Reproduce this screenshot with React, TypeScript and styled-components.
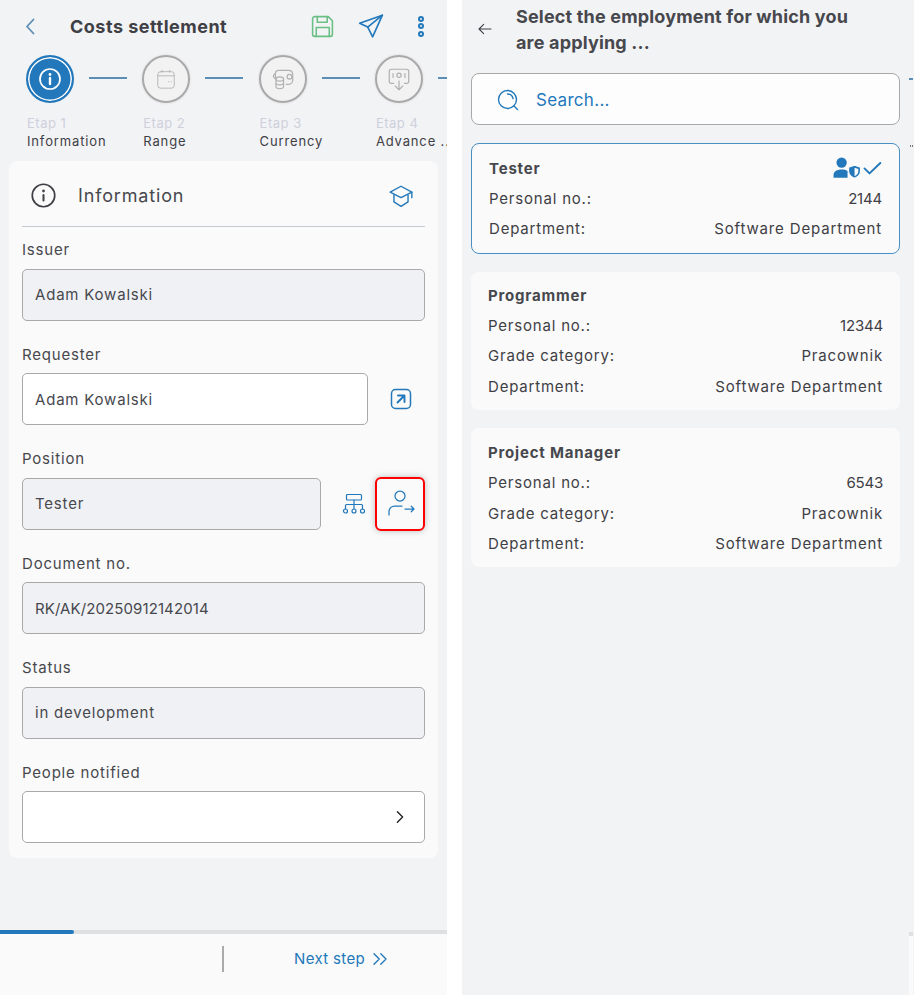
import React from 'react';
import styled, { createGlobalStyle } from 'styled-components';

const BLUE = '#2278ba';
const STEPS = [
  { etap: 'Etap 1', name: 'Information', active: true },
  { etap: 'Etap 2', name: 'Range' },
  { etap: 'Etap 3', name: 'Currency' },
  { etap: 'Etap 4', name: 'Advance ...' },
];

const JOBS = [
  {
    title: 'Tester',
    selected: true,
    top: 12,
    rows: [['Personal no.:', '2144'], ['Department:', 'Software Department']],
  },
  {
    title: 'Programmer',
    top: 10,
    rows: [['Personal no.:', '12344'], ['Grade category:', 'Pracownik'], ['Department:', 'Software Department']],
  },
  {
    title: 'Project Manager',
    top: 12,
    rows: [['Personal no.:', '6543'], ['Grade category:', 'Pracownik'], ['Department:', 'Software Department']],
  },
];

function Icon({ size, color, width = 1.5, box = 24, children }: any) {
  return (
    <svg width={size} height={size} viewBox={`0 0 ${box} ${box}`} fill="none" stroke={color} strokeWidth={width} strokeLinecap="round" strokeLinejoin="round">
      {children}
    </svg>
  );
}

function StepIcon({ index }: { index: number }) {
  if (index === 0) {
    return (
      <Icon size={24} color="#fff" width={1.7}>
        <circle cx="12" cy="12" r="10" />
        <path d="M12 11v6" strokeWidth={2.4} />
        <circle cx="12" cy="7.5" r="0.6" fill="#fff" />
      </Icon>
    );
  }
  if (index === 1) {
    return (
      <Icon size={22} color="#b4b4b4" width={1}>
        <rect x="3" y="4" width="18" height="18" rx="3" />
        <path d="M3 8.500h18M8 2.500v2M16 2.500v2M14.500 15h.5M17.500 15h.5" />
      </Icon>
    );
  }
  if (index === 2) {
    return (
      <Icon size={26} color="#b0b0b0" width={1.1}>
        <path d="M5 12V7a3 3 0 0 1 3-3h9c3 0 4 2 4 4v5a4 4 0 0 1-4 4h-2" />
        <path d="M5 7c-2 1-2.500 3-1 4" />
        <circle cx="18" cy="10" r="2.200" />
        <ellipse cx="9" cy="12" rx="3.500" ry="2" />
        <path d="M5.500 12v7c0 1.200 1.500 2 3.500 2s3.500-.8 3.500-2v-7M5.500 15.500c0 1.200 1.500 2 3.500 2s3.500-.8 3.500-2" />
      </Icon>
    );
  }
  return (
    <Icon size={26} color="#b0b0b0" width={1.1}>
      <path d="M7 16H5a2 2 0 0 1-2-2V5a2 2 0 0 1 2-2h14a2 2 0 0 1 2 2v9a2 2 0 0 1-2 2h-2" />
      <circle cx="12" cy="8.500" r="2" />
      <path d="M6.500 7v3.500M17.500 7v3.500M12 14v8M8.500 18.500 12 22l3.500-3.500" />
    </Icon>
  );
}

function Field({ label, value, readOnly, code, children }: any) {
  return (
    <FieldBlock>
      <FieldLabel>{label}</FieldLabel>
      <FieldRow>
        <InputBox $readOnly={readOnly} $code={code}>{value}</InputBox>
        {children}
      </FieldRow>
    </FieldBlock>
  );
}

export default function App() {
  return (
    <Page>
      <GlobalStyle />
      <LeftPanel>
        <TopBar>
          <BackBtn>
            <Icon size={24} color="#5b8db5" width={1.8}>
              <path d="M14.500 5.500 8 12.500l6.500 7" />
            </Icon>
          </BackBtn>
          <PageTitle>Costs settlement</PageTitle>
          <TopActions>
            <Icon size={25} color="#6abf85" width={1.5}>
              <path d="M4.500 2.500h13l4 4v13a2 2 0 0 1-2 2h-15a2 2 0 0 1-2-2v-15a2 2 0 0 1 2-2Z" />
              <path d="M7 2.500v5.500h9.500V2.500M6 21.500V13h12.500v8.500" />
            </Icon>
            <Icon size={26} color={BLUE} width={1.5}>
              <path d="M22.500 2 1.500 9.500l7.500 3.500 4.500 9z" />
              <path d="M22.500 2 9 13" />
            </Icon>
            <DotsIcon>
              <span />
              <span />
              <span />
            </DotsIcon>
          </TopActions>
        </TopBar>

        <Stepper>
          {STEPS.map((step, i) => (
            <Step key={step.etap}>
              <StepTrack>
                <StepCircle $active={step.active}>
                  <StepIcon index={i} />
                </StepCircle>
                <StepLine />
              </StepTrack>
              <StepEtap>{step.etap}</StepEtap>
              <StepName>{step.name}</StepName>
            </Step>
          ))}
        </Stepper>

        <FormCard>
          <CardHead>
            <Icon size={27} color="#3f4045" width={1.5}>
              <circle cx="12" cy="12" r="10" />
              <path d="M12 11.500v5" strokeWidth={1.8} />
              <circle cx="12" cy="8" r="0.5" fill="#3f4045" />
            </Icon>
            <CardHeadTitle>Information</CardHeadTitle>
            <Icon size={26} color={BLUE} width={1.3}>
              <path d="M12 3 2 8.500 12 13.500l10-5z" />
              <path d="M5.500 11v6.500L12 21.500l6.500-4V11M22 8.500v5" />
            </Icon>
          </CardHead>

          <Field label="Issuer" value="Adam Kowalski" readOnly />
          <Field label="Requester" value="Adam Kowalski">
            <SideBtn $w={57} $pad={12}>
              <Icon size={24} color={BLUE} width={1.5}>
                <rect x="2.500" y="2.500" width="19" height="19" rx="4" />
                <path d="M9 8.500h6.500V15M15.500 8.500 8.500 15.500" strokeWidth={1.9} />
              </Icon>
            </SideBtn>
          </Field>
          <Field label="Position" value="Tester" readOnly>
            <SideBtn $w={50} $pad={5}>
              <Icon size={24} color={BLUE} width={1.2}>
                <rect x="4.500" y="2.500" width="15" height="5.500" rx="1" />
                <path d="M12 8v9M3.500 17v-3.500a1 1 0 0 1 1-1h15a1 1 0 0 1 1 1V17" />
                <circle cx="3.500" cy="19" r="2" />
                <circle cx="12" cy="19" r="2" />
                <circle cx="20.500" cy="19" r="2" />
              </Icon>
            </SideBtn>
            <HighlightBtn>
              <Icon size={30} color={BLUE} width={1}>
                <circle cx="12" cy="5.600" r="4" />
                <path d="M3.200 20.800v-2.700a4.500 4.500 0 0 1 4.500-4.500h5.900M16 16h7.200M21 13.800l2.200 2.200-2.200 2.200" />
              </Icon>
            </HighlightBtn>
          </Field>
          <Field label="Document no." value="RK/AK/20250912142014" readOnly code />
          <Field label="Status" value="in development" readOnly />
          <Field label="People notified" value="">
            <ChevronInInput>
              <Icon size={18} color="#222" width={1.8}>
                <path d="m8.500 5 7 7-7 7" />
              </Icon>
            </ChevronInInput>
          </Field>
        </FormCard>

        <Footer>
          <Progress>
            <ProgressFill style={{ width: `${(1 / 6) * 100}%` }} />
          </Progress>
          <FooterBar>
            <FooterDivider />
            <NextStep>
              Next step
              <Icon size={18} color={BLUE} width={1.8}>
                <path d="m4 5 7 7-7 7M13 5l7 7-7 7" />
              </Icon>
            </NextStep>
          </FooterBar>
        </Footer>
      </LeftPanel>

      <RightPanel>
        <DialogHead>
          <DialogBack>
            <Icon size={16} color="#3f4045" width={1.6}>
              <path d="M21 12H3M10 5l-7 7 7 7" />
            </Icon>
          </DialogBack>
          <DialogTitle>Select the employment for which you are applying ...</DialogTitle>
        </DialogHead>

        <SearchBox>
          <Icon size={24} color={BLUE} width={1.4}>
            <circle cx="11.500" cy="11.500" r="9" />
            <path d="M18 18l3.500 3.500M11.500 6c3 0 5 2 5.500 4.500" />
          </Icon>
          <SearchText>Search...</SearchText>
        </SearchBox>

        {JOBS.map(job => (
          <JobCard key={job.title} $selected={job.selected} $top={job.top}>
            <JobHead>
              <JobTitle>{job.title}</JobTitle>
              {job.selected && (
                <JobMarks>
                  <svg width="28" height="22" viewBox="0 0 26 20" fill={BLUE}>
                    <circle cx="8" cy="5" r="4.800" />
                    <path d="M0.500 19v-2.500c0-3 3-5 7.500-5 2 0 4 .4 5.500 1.200V19z" />
                    <path d="M20 7.500l5.500 1.800v3.700c0 3-2.300 5.200-5.500 6.500-3.200-1.300-5.500-3.500-5.500-6.500V9.300z" stroke="#fafafa" strokeWidth="1" />
                    <path d="M20 9.800l3.500 1.200v2.300c0 2-1.500 3.400-3.500 4.300z" fill="#fafafa" />
                  </svg>
                  <Icon size={20} color={BLUE} width={2.3}>
                    <path d="m3 12.500 6 6L22 6" />
                  </Icon>
                </JobMarks>
              )}
            </JobHead>
            {job.rows.map(([k, v]) => (
              <JobRow key={k}>
                <span>{k}</span>
                <JobValue $num={/^\d+$/.test(v)}>{v}</JobValue>
              </JobRow>
            ))}
          </JobCard>
        ))}

        <EdgeStrip>
          <EdgeTick />
          <EdgeDots />
          <EdgeTrack />
          <EdgeFooter />
        </EdgeStrip>
      </RightPanel>
    </Page>
  );
}

const GlobalStyle = createGlobalStyle`
  html, body { margin: 0; padding: 0; background: #fff; }
  * { box-sizing: border-box; }
  body { font-family: Inter, "Open Sans", "Liberation Sans", sans-serif; color: #3f4045; }
`;

const Page = styled.div`
  display: flex;
  width: 914px;
  height: 995px;
  overflow: hidden;
  background: #fff;
`;

const LeftPanel = styled.div`
  width: 447px;
  height: 995px;
  background: #f2f3f5;
  display: flex;
  flex-direction: column;
  flex-shrink: 0;
`;

const TopBar = styled.div`
  display: flex;
  align-items: center;
  height: 52px;
  padding: 0 13px 0 19px;
`;

const BackBtn = styled.div`
  display: flex;
  width: 51px;
`;

const PageTitle = styled.div`
  flex: 1;
  font-size: 18px;
  font-weight: 700;
  letter-spacing: 0.5px;
  color: #3f4045;
`;

const TopActions = styled.div`
  display: flex;
  align-items: center;
  gap: 22.5px;
`;

const DotsIcon = styled.div`
  display: flex;
  flex-direction: column;
  gap: 1.5px;
  width: 26px;
  margin-left: 2px;
  align-items: center;

  span {
    width: 6px;
    height: 6px;
    border-radius: 50%;
    border: 2px solid ${BLUE};
  }
`;

const Stepper = styled.div`
  display: flex;
  height: 109px;
  padding-left: 27px;
  overflow: hidden;
`;

const Step = styled.div`
  width: 116.3px;
  flex-shrink: 0;
`;

const StepTrack = styled.div`
  display: flex;
  align-items: center;
  height: 50px;
  margin-top: 2px;
  margin-bottom: 10px;
`;

const StepCircle = styled.div<{ $active?: boolean }>`
  width: 48px;
  height: 48px;
  border-radius: 50%;
  flex-shrink: 0;
  margin-left: -1px;
  display: flex;
  align-items: center;
  justify-content: center;
  background: ${p => (p.$active ? BLUE : '#f2f2f2')};
  border: 2px solid ${p => (p.$active ? BLUE : '#a9a9a9')};
  box-shadow: ${p => (p.$active ? `inset 0 0 0 1.500px #fff` : '0 0 0 1.500px #ebebee')};
`;

const StepLine = styled.div`
  width: 38px;
  height: 1.500px;
  margin-left: 15px;
  margin-top: -2px;
  background: #5b8db5;
`;

const StepEtap = styled.div`
  font-size: 13px;
  line-height: 18px;
  letter-spacing: 0.5px;
  color: #cfd0dc;
`;

const StepName = styled.div`
  font-size: 13px;
  line-height: 19px;
  letter-spacing: 0.85px;
  color: #3f4045;
  white-space: nowrap;
`;

const FormCard = styled.div`
  width: 429px;
  height: 697px;
  margin-left: 9px;
  padding: 0 13px;
  background: #fafafa;
  border-radius: 8px;
  flex-shrink: 0;
`;

const CardHead = styled.div`
  display: flex;
  align-items: center;
  height: 66px;
  padding: 4px 11px 0 8px;
  border-bottom: 1.500px solid #c3cad1;
`;

const CardHeadTitle = styled.div`
  flex: 1;
  margin-left: 21px;
  font-size: 18px;
  letter-spacing: 0.85px;
  color: #47484d;
`;

const FieldBlock = styled.div`
  margin-top: 11.5px;
  height: 93px;
`;

const FieldLabel = styled.div`
  font-size: 15px;
  line-height: 20px;
  letter-spacing: 0.8px;
  color: #47484d;
  height: 31px;
  padding-top: 1.500px;
`;

const FieldRow = styled.div`
  display: flex;
  align-items: center;
  height: 52px;
  margin-top: -1px;
  position: relative;
`;

const InputBox = styled.div<{ $readOnly?: boolean; $code?: boolean }>`
  flex: 1;
  height: 52px;
  display: flex;
  align-items: center;
  padding: 0 12px;
  font-size: 15px;
  letter-spacing: ${p => (p.$code ? '0.1px' : '0.8px')};
  color: #47484d;
  background: ${p => (p.$readOnly ? '#f0f1f5' : '#fff')};
  border: 1px solid #a9a9a9;
  border-radius: 5px;
`;

const SideBtn = styled.div<{ $w: number; $pad: number }>`
  width: ${p => p.$w}px;
  height: 52px;
  flex-shrink: 0;
  display: flex;
  align-items: center;
  justify-content: flex-end;
  padding-right: ${p => p.$pad}px;
`;

const HighlightBtn = styled.div`
  width: 50px;
  height: 54px;
  margin-left: 4px;
  flex-shrink: 0;
  display: flex;
  align-items: center;
  justify-content: center;
  border: 2px solid #f00;
  border-radius: 6px;
  box-shadow: 0 0 6px rgba(0, 0, 0, 0.25);
  background: #fafafa;
`;

const ChevronInInput = styled.div`
  position: absolute;
  right: 16px;
  top: 17px;
  display: flex;
`;

const Footer = styled.div`
  margin-top: auto;
  height: 65px;
`;

const Progress = styled.div`
  height: 4px;
  background: #dfe0e2;
`;

const ProgressFill = styled.div`
  height: 4px;
  background: ${BLUE};
  border-radius: 0 2px 2px 0;
`;

const FooterBar = styled.div`
  height: 61px;
  background: #fafafa;
  display: flex;
  align-items: center;
  padding-left: 222px;
  padding-bottom: 12px;
`;

const FooterDivider = styled.div`
  width: 2px;
  height: 26px;
  background: #aaa;
`;

const NextStep = styled.div`
  display: flex;
  align-items: center;
  gap: 6px;
  margin-left: 70px;
  font-size: 15px;
  letter-spacing: 0.35px;
  color: ${BLUE};
`;

const RightPanel = styled.div`
  position: relative;
  width: 452px;
  margin-left: 15px;
  height: 995px;
  background: #f2f3f5;
  padding: 0 14px 0 9px;
`;

const DialogHead = styled.div`
  display: flex;
  height: 73px;
  padding-top: 4px;
`;

const DialogBack = styled.div`
  width: 45px;
  padding: 17px 0 0 6px;
  flex-shrink: 0;
`;

const DialogTitle = styled.div`
  font-size: 18px;
  font-weight: 700;
  line-height: 26px;
  width: 345px;
  color: #47484d;
  letter-spacing: 0.17px;
`;

const SearchBox = styled.div`
  height: 52px;
  display: flex;
  align-items: center;
  gap: 16px;
  padding: 1px 0 0 24px;
  background: #fdfdfd;
  border: 1px solid #a9a9a9;
  border-radius: 8px;
  margin-bottom: 18px;
`;

const SearchText = styled.div`
  font-size: 17px;
  letter-spacing: 0.3px;
  color: ${BLUE};
`;

const JobCard = styled.div<{ $selected?: boolean; $top: number }>`
  padding: ${p => `${p.$top}px ${p.$selected ? 17 : 16}px ${p.$selected ? 9 : 7}px`};
  margin-bottom: 18px;
  background: #fafafa;
  border-radius: 8px;
  border: 1px solid ${p => (p.$selected ? '#4a8fc4' : 'transparent')};
`;

const JobHead = styled.div`
  display: flex;
  align-items: center;
  justify-content: space-between;
  height: 24px;
  margin-bottom: 3px;
`;

const JobTitle = styled.div`
  font-size: 15px;
  font-weight: 700;
  letter-spacing: 0.8px;
  color: #47484d;
`;

const JobMarks = styled.div`
  display: flex;
  align-items: center;
  gap: 1px;
`;

const JobRow = styled.div`
  display: flex;
  justify-content: space-between;
  height: 30.500px;
  align-items: center;
  font-size: 15px;
  letter-spacing: 0.8px;
  color: #3f4045;
`;

const JobValue = styled.span<{ $num?: boolean }>`
  letter-spacing: ${p => (p.$num ? '-0.2px' : '0.85px')};
`;

const EdgeStrip = styled.div`
  position: absolute;
  top: 0;
  right: 0;
  width: 5px;
  height: 995px;
  background: #f2f3f5;
`;

const EdgeTick = styled.div`
  position: absolute;
  top: 78px;
  left: 0;
  width: 4px;
  height: 1.500px;
  background: #5b8db5;
`;

const EdgeDots = styled.div`
  position: absolute;
  top: 145px;
  left: 1px;
  width: 3px;
  height: 1.500px;
  border-left: 1px solid #777;
  border-right: 1px solid #777;
`;

const EdgeTrack = styled.div`
  position: absolute;
  top: 932px;
  left: 0;
  width: 4px;
  height: 4px;
  background: #dfe0e2;
`;

const EdgeFooter = styled.div`
  position: absolute;
  top: 936px;
  left: 0;
  width: 4px;
  height: 59px;
  background: #fafafa;
`;
